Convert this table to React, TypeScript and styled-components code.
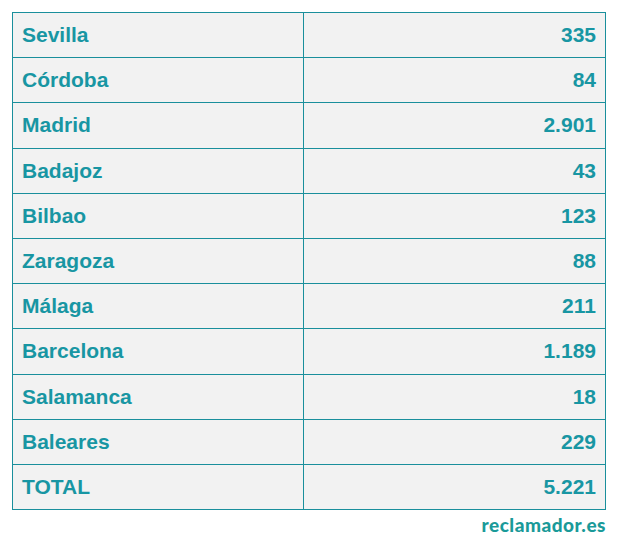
import * as React from 'react';
import styled, { createGlobalStyle } from 'styled-components';

const rows: [string, string][] = [
  ['Sevilla', '335'],
  ['Córdoba', '84'],
  ['Madrid', '2.901'],
  ['Badajoz', '43'],
  ['Bilbao', '123'],
  ['Zaragoza', '88'],
  ['Málaga', '211'],
  ['Barcelona', '1.189'],
  ['Salamanca', '18'],
  ['Baleares', '229'],
  ['TOTAL', '5.221'],
];

export default function App() {
  return (
    <>
      <GlobalStyle />
      <StyledPage>
        <StyledTable>
          <colgroup>
            <col style={{ width: 291 }} />
            <col />
          </colgroup>
          <tbody>
            {rows.map(([city, count]) => (
              <tr key={city}>
                <StyledCell>{city}</StyledCell>
                <StyledCell align="right">{count}</StyledCell>
              </tr>
            ))}
          </tbody>
        </StyledTable>
        <StyledBrand>reclamador.es</StyledBrand>
      </StyledPage>
    </>
  );
}

const GlobalStyle = createGlobalStyle`
  body {
    margin: 0;
    background: #ffffff;
  }
`;

const StyledPage = styled.div`
  display: flex;
  flex-direction: column;
  align-items: flex-end;
  width: 594px;
  padding: 12px 0 0 12px;
`;

const StyledTable = styled.table`
  width: 594px;
  border-collapse: collapse;
  table-layout: fixed;
  background: #f2f2f2;
  font-family: 'Liberation Sans', Arial, sans-serif;
  font-weight: bold;
  font-size: 21px;
  color: #1896a3;
`;

const StyledCell = styled.td<{ align?: 'left' | 'right' }>`
  height: 44.2px;
  padding: 0 9px 0 9px;
  border: 1px solid #1a8f9c;
  text-align: ${({ align }) => align || 'left'};
  vertical-align: middle;
`;

const StyledBrand = styled.div`
  margin-top: 3px;
  font-family: Lato, 'Open Sans', sans-serif;
  font-weight: 900;
  font-size: 19px;
  color: #1a9a99;
  letter-spacing: 0.5px;
`;
